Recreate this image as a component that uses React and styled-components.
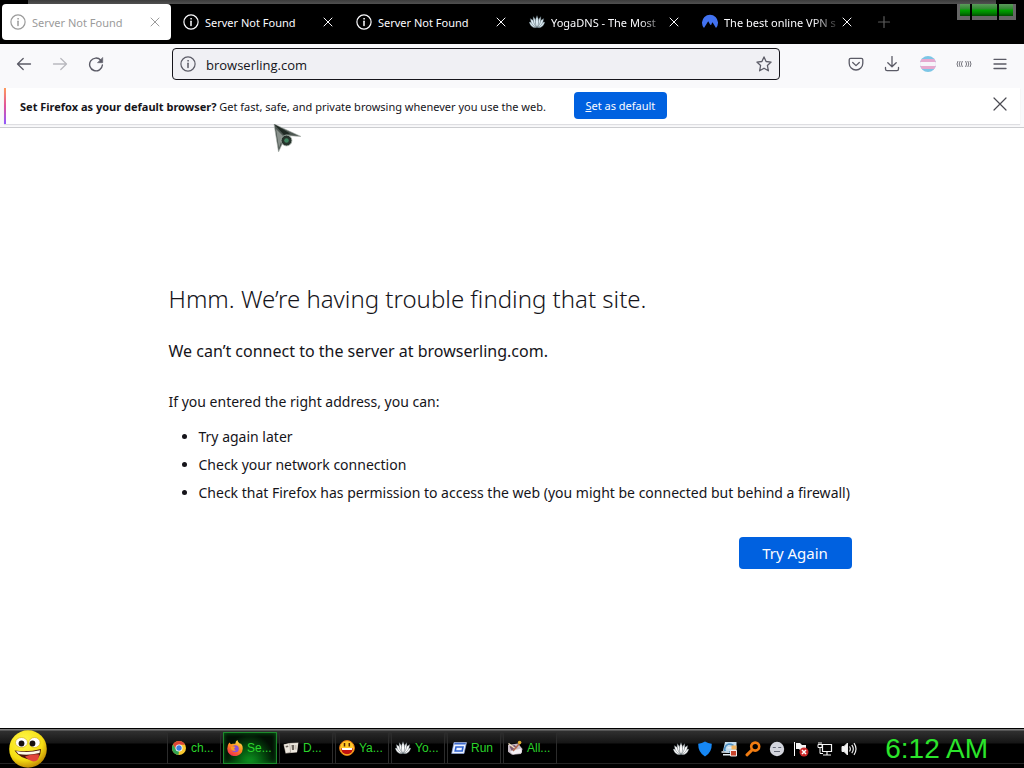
import React from 'react';
import styled, { createGlobalStyle, css } from 'styled-components';

const GlobalStyle = createGlobalStyle`
  * { box-sizing: border-box; }
  body { margin: 0; background: #fff; font-family: "Noto Sans", "Open Sans", sans-serif; color: #15141a; }
  button { font: inherit; color: inherit; background: none; border: 0; padding: 0; }
  h1, p, ul { margin: 0; }
  svg { display: block; flex: none; }
`;

const Desktop = styled.div`
  position: relative;
  display: flex;
  flex-direction: column;
  min-height: 100vh;
`;

/* Tab strip */
const TabStrip = styled.header`
  display: flex;
  align-items: flex-start;
  height: 44px;
  padding: 4px 8px 0 2px;
  background: #000;
`;
const WindowEdge = styled.div`
  position: absolute;
  top: 0;
  left: 28px;
  right: 28px;
  height: 4px;
  background: linear-gradient(#3c3c3c, #505050);
`;
const Tabs = styled.nav`
  display: flex;
  flex: 0 1 861px;
  gap: 4px;
  min-width: 0;
`;
const Tab = styled.div`
  display: flex;
  align-items: center;
  flex: 1 1 0;
  min-width: 0;
  height: 36px;
  padding: 0 6px 0 8px;
  border-radius: 4px;
  color: ${(p) => (p.$active ? '#9b9b9b' : '#fbfbfe')};
  background: ${(p) => (p.$active ? '#fff' : 'transparent')};
`;
const TabSelect = styled.button`
  display: flex;
  align-items: center;
  flex: 1;
  gap: 6px;
  min-width: 0;
  height: 36px;
`;
const TabLabel = styled.span`
  flex: 1;
  min-width: 0;
  overflow: hidden;
  white-space: nowrap;
  text-align: left;
  font-size: 11px;
  line-height: 18px;
  padding-top: 1px;
  ${(p) => p.$fade && css`mask-image: linear-gradient(to left, rgba(0, 0, 0, 0.15), #000 24px);`}
`;
const SmallButton = styled.button`
  display: grid;
  place-items: center;
  width: 20px;
  height: 20px;
`;
const NewTab = styled.button`
  display: grid;
  place-items: center;
  width: 28px;
  height: 36px;
  margin-left: 7px;
  color: #5c5c5c;
`;
const Meter = styled.div`
  display: flex;
  gap: 2px;
  margin-left: auto;
`;
const MeterCell = styled.span`
  width: ${(p) => p.$width}px;
  height: 16px;
  border: solid #666;
  border-width: 0 ${(p) => (p.$end === 'right' ? 3 : 0)}px 4px ${(p) => (p.$end === 'left' ? 3 : 0)}px;
  background: linear-gradient(#5c9a5c 0, #2f8a2f 5px, #00a400 6px, #008200 9px, #004c00 12px);
`;

/* Navigation bar */
const Toolbar = styled.div`
  display: flex;
  align-items: center;
  gap: 58px;
  height: 44px;
  padding: 0 6px 4px;
  background: #f9f9fb;
  color: #5b5b66;
`;
const ToolGroup = styled.div`
  display: flex;
`;
const ToolButton = styled.button`
  display: grid;
  place-items: center;
  width: 36px;
  height: 32px;
  opacity: ${(p) => (p.disabled ? 0.4 : 1)};
`;
const UrlBar = styled.form`
  display: flex;
  align-items: center;
  flex: 1;
  min-width: 0;
  height: 32px;
  padding: 0 5px 0 7px;
  gap: 10px;
  border: 1px solid #15141a;
  border-radius: 4px;
  background: #f0f0f4;
`;
const UrlInput = styled.input`
  flex: 1;
  min-width: 0;
  height: 28px;
  padding: 2px 0 0;
  border: 0;
  outline: 0;
  background: transparent;
  color: #15141a;
  font-family: "Open Sans", "Noto Sans", sans-serif;
  font-size: 13px;
`;

/* Default browser prompt */
const Prompt = styled.section`
  padding: 0 4px 3px;
  background: #f9f9fb;
  border-bottom: 1px solid #cccdd0;
`;
const PromptBody = styled.div`
  display: flex;
  align-items: flex-start;
  height: 36px;
  padding: 4px 10px 0 16px;
  background: linear-gradient(#ff9a5a, #e0529c 50%, #9059ff) left / 2px 100% no-repeat, #fff;
  box-shadow: 0 1px 1px #dedee2;
`;
const PromptText = styled.p`
  font-size: 11px;
  line-height: 30px;
  white-space: nowrap;
`;
const PrimaryButton = styled.button`
  flex: none;
  border-radius: 4px;
  background: #0061e0;
  color: #fbfbfe;
`;
const SetDefault = styled(PrimaryButton)`
  width: 93px;
  height: 27px;
  margin: 0 auto 0 28px;
  font-size: 11px;
`;
const Dismiss = styled(SmallButton)`
  height: 24px;
  color: #4a4a52;
`;

/* Error page */
const Page = styled.main`
  display: flex;
  flex: 1;
  align-items: center;
  justify-content: center;
  padding: 20px 24px 26px;
`;
const ErrorBox = styled.div`
  display: flex;
  flex-direction: column;
  width: 100%;
  max-width: 687px;
`;
const Title = styled.h1`
  font-size: 24px;
  font-weight: 300;
  line-height: 36px;
`;
const Lead = styled.p`
  margin-top: 20px;
  font-size: 16px;
  line-height: 28px;
`;
const Hint = styled.p`
  margin-top: 26px;
  font-size: 14px;
  line-height: 22px;
`;
const Steps = styled.ul`
  margin-top: 10px;
  padding-left: 30px;
  font-size: 14px;
  line-height: 28px;
`;
const TryAgain = styled(PrimaryButton)`
  align-self: flex-end;
  width: 113px;
  height: 32px;
  margin: 30px 4px 0 0;
  font-size: 15px;
`;

/* Taskbar */
const Taskbar = styled.footer`
  display: flex;
  align-items: center;
  height: 40px;
  padding: 0 36px 0 8px;
  border-top: 1px solid #000;
  background:
    linear-gradient(#242424, #242424) 0 34px / 100% 1px no-repeat,
    linear-gradient(#7a7a7a 0, #7a7a7a 1px, #303030 2px, #161616 14px, #000 15px);
`;
const StartButton = styled.button`
  width: 40px;
  height: 39px;
`;
const TaskList = styled.nav`
  display: flex;
  gap: 2px;
  margin-left: 119px;
  padding-bottom: 2px;
`;
const TaskButton = styled.button`
  display: flex;
  align-items: center;
  gap: 4px;
  width: 54px;
  height: 32px;
  padding-left: 3px;
  border: 1px solid #2b2b2b;
  background: linear-gradient(#262626, #131313 10px, #000 11px);
  color: #2bd42b;
  font-family: "Liberation Sans", Arial, sans-serif;
  font-size: 12px;
  white-space: nowrap;
  ${(p) => p.$active && css`
    border-color: #1c8a2c;
    background: radial-gradient(ellipse at 50% 110%, #0fa825 0, #04500e 40%, #020f04 70%);
    box-shadow: inset 0 0 4px #0a6a18;
  `}
`;
const Tray = styled.div`
  display: flex;
  gap: 4px;
  margin-left: auto;
`;
const TrayButton = styled.button`
  display: grid;
  place-items: center;
  width: 20px;
  height: 24px;
`;
const Clock = styled.time`
  margin-left: 26px;
  color: #2be52b;
  font-family: "Liberation Sans", Arial, sans-serif;
  font-size: 28px;
  line-height: 36px;
  white-space: nowrap;
`;
const Pointer = styled.svg`
  position: absolute;
  top: 124px;
  left: 273px;
`;

/* Icons */
const Line = ({ size = 16, children, width = 1.3, ...rest }) => (
  <svg width={size} height={size} viewBox="0 0 16 16" fill="none" stroke="currentColor"
    strokeWidth={width} strokeLinecap="round" strokeLinejoin="round" aria-hidden="true" {...rest}>
    {children}
  </svg>
);
const InfoIcon = () => (
  <Line width={1.2}>
    <circle cx="8" cy="8" r="7.1" />
    <path d="M8 7.2v4.3" strokeWidth="1.5" />
    <circle cx="8" cy="4.8" r=".5" fill="currentColor" strokeWidth=".6" />
  </Line>
);
const CloseIcon = () => <Line width={1}><path d="M4 4l8 8M12 4l-8 8" /></Line>;
const DismissIcon = () => <Line width={1.2}><path d="M2 2l12 12M14 2L2 14" /></Line>;
const PlusIcon = () => <Line width={1.2}><path d="M8 2.500v11M2.500 8h11" /></Line>;
const BackIcon = () => <Line width={1.3}><path d="M14.500 8H1.600M7.200 2.500L1.500 8l5.700 5.500" /></Line>;
const ForwardIcon = () => <Line width={1.3}><path d="M1.500 8h12.900M8.800 2.500L14.500 8l-5.700 5.500" /></Line>;
const ReloadIcon = () => (
  <Line width={1.4}>
    <path d="M12.800 4.200A6.400 6.400 0 1 0 14.400 9" />
    <path d="M14.700 1.800v4.900H9.800z" fill="currentColor" strokeWidth=".6" />
  </Line>
);
const StarIcon = () => (
  <Line width={1.3}><path d="M8 .9l2.100 4.600 5 .6-3.700 3.400 1 5.300L8 12.200l-4.400 2.600 1-5.300L.9 6.100l5-.6z" /></Line>
);
const PocketIcon = () => (
  <Line>
    <path d="M2.700 2.300h10.600c.9 0 1.500.6 1.500 1.500v3.400a6.800 6.800 0 0 1-13.600 0V3.800c0-.9.6-1.500 1.500-1.500z" />
    <path d="M4.700 6.500L8 9.600l3.300-3.100" />
  </Line>
);
const DownloadIcon = () => (
  <Line><path d="M8 .5v10.200M3.800 6.700L8 10.800l4.200-4.100M1.500 11.500V13c0 1 .6 1.600 1.600 1.600h9.800c1 0 1.600-.6 1.600-1.600v-1.500" /></Line>
);
const MenuIcon = () => <Line><path d="M2 3.300h12M2 8h12M2 12.500h12" /></Line>;
const FlagIcon = () => (
  <svg width="16" height="16" viewBox="0 0 16 16" aria-hidden="true">
    <clipPath id="flag-disc"><circle cx="8" cy="8" r="8" /></clipPath>
    <g clipPath="url(#flag-disc)">
      <path fill="#7cc6e6" d="M0 0h16v16H0z" />
      <path fill="#e6a9cf" d="M0 3h16v10H0z" />
      <path fill="#f6f4fa" d="M0 6h16v4H0z" />
    </g>
  </svg>
);
const WavesIcon = () => (
  <svg width="16" height="16" viewBox="0 0 16 16" fill="none" stroke="#77777f" strokeWidth="1" aria-hidden="true">
    <path d="M2 5Q0 8 2 11M4.200 5Q2.200 8 4.200 11M6.400 5Q4.400 8 6.400 11M9.600 5Q11.600 8 9.600 11M11.800 5Q13.800 8 11.800 11M14 5Q16 8 14 11" />
  </svg>
);
const LotusIcon = ({ color = '#dcecf4' }) => (
  <svg width="16" height="16" viewBox="0 0 16 16" fill={color} stroke="#2c3a42" strokeWidth=".4" aria-hidden="true">
    <path d="M0 8Q4.500 7.500 8 13.500Q2.500 15 0 8zM16 8Q11.500 7.500 8 13.500Q13.500 15 16 8z" />
    <path d="M1.200 4.500Q6 6 8 13.500Q2 12 1.200 4.500zM14.800 4.500Q10 6 8 13.500Q14 12 14.800 4.500z" />
    <path d="M4.200 2.500Q8 6 8 13.500Q3.500 9.500 4.200 2.500zM11.800 2.500Q8 6 8 13.500Q12.500 9.500 11.800 2.500z" />
    <path d="M8 1.500Q11.200 8 8 14Q4.800 8 8 1.500z" />
  </svg>
);
const NordIcon = () => (
  <svg width="16" height="16" viewBox="0 0 16 16" aria-hidden="true">
    <path fill="#4272f0" d="M2 14A8 8 0 1 1 14 14L10.500 8.200 9.200 10.400 9.500 10.900 8.200 10.700 6.200 7.300z" />
  </svg>
);
const SmileyIcon = () => (
  <svg width="40" height="39" viewBox="0 0 40 39" aria-hidden="true">
    <defs>
      <radialGradient id="smiley-skin" cx=".4" cy=".3" r=".75">
        <stop offset="0" stopColor="#fff94e" /><stop offset=".65" stopColor="#f6de12" /><stop offset="1" stopColor="#b87c00" />
      </radialGradient>
    </defs>
    <circle cx="20" cy="20" r="18.800" fill="url(#smiley-skin)" />
    <ellipse cx="13.500" cy="13.500" rx="6" ry="5" fill="#fff" stroke="#cfa800" strokeWidth=".6" />
    <ellipse cx="26.500" cy="13.500" rx="5.600" ry="5" fill="#fff" stroke="#cfa800" strokeWidth=".6" />
    <circle cx="13.500" cy="14.500" r="2.900" fill="#171010" />
    <circle cx="24.500" cy="14.500" r="2.900" fill="#171010" />
    <path d="M6.500 21.500Q20 23.500 33 20Q32.500 31 25 31Q12 30 6.500 21.500z" fill="#4b1608" />
    <path d="M8 22Q20 24.200 32 21.200L31.500 24Q20 27 10.500 25z" fill="#fffbe8" />
    <path d="M17 27.500Q25 24.500 31 25.500Q31 32.500 25.500 32.500Q20.500 31.500 17 27.500z" fill="#e1453a" />
  </svg>
);
const ChromeIcon = () => (
  <svg width="16" height="16" viewBox="0 0 16 16" aria-hidden="true">
    <circle cx="8" cy="8" r="7" fill="#f9c82f" />
    <path fill="#dd4537" d="M2 4.400A7 7 0 0 1 14.100 4.700H8L5 9.500z" />
    <path fill="#31a452" d="M2 4.400L5.100 9.700 8 11.300 7.500 15A7 7 0 0 1 2 4.400z" />
    <circle cx="8" cy="8" r="3.500" fill="#fff" />
    <circle cx="8" cy="8" r="2.700" fill="#3f7de0" />
  </svg>
);
const FirefoxIcon = () => (
  <svg width="16" height="16" viewBox="0 0 16 16" aria-hidden="true">
    <defs>
      <linearGradient id="fox" x1=".8" y1="0" x2=".3" y2="1">
        <stop offset="0" stopColor="#ffe14a" /><stop offset=".5" stopColor="#ff8a1f" /><stop offset="1" stopColor="#ee2a50" />
      </linearGradient>
    </defs>
    <path fill="url(#fox)" d="M2.300 2.500L4 4.200 5.600 3.700Q7.600 4 8.400 3.600Q8.500 1 10.300 0Q10.700 2.200 13.300 4L13.800 3.300Q16 6 15.700 9A7.700 7.200 0 0 1 .3 8.800Q.2 5.200 2.300 2.500z" />
    <circle cx="8.300" cy="8.700" r="3.500" fill="#8950d8" />
    <path d="M4 6.700Q6.500 5.500 8.500 7.200L6.800 8.700 8.800 10.500Q6 11.800 4 9z" fill="#ff9a25" />
  </svg>
);
const BookIcon = () => (
  <svg width="16" height="16" viewBox="0 0 16 16" aria-hidden="true">
    <path fill="#a9a198" d="M.5 4.500L6 3l9.500-.5L14 12.500 2.500 13.500z" />
    <path fill="#ece7dd" d="M1 4.500L6.500 3.500 7 12 3 13zM7 3.500L15 3l-1 9-6 .6z" />
    <path fill="#6d655d" d="M8.500 5h2.500v5H9zM2.500 6l2.500-.5.4 1.500-2.400.4z" />
    <path fill="#c9c1b5" d="M11.500 5h2v4.500h-2z" />
  </svg>
);
const GrinIcon = () => (
  <svg width="16" height="16" viewBox="0 0 16 16" aria-hidden="true">
    <circle cx="8" cy="8" r="7.400" fill="#ffc928" stroke="#e87a15" />
    <path stroke="#542105" strokeWidth="1.500" d="M5.500 3v3.500M10.300 3v3.500" />
    <path fill="#c01010" d="M2 8h12Q13.500 14.200 8 14.200T2 8z" />
    <path fill="#fff" d="M2.600 8h10.800l-.5 2H3.200z" />
  </svg>
);
const RunIcon = () => (
  <svg width="16" height="16" viewBox="0 0 16 16" aria-hidden="true">
    <path fill="#edf3ff" stroke="#8ea4d8" strokeWidth=".7" d="M3 2.500h12.500L13 13.500H.7z" />
    <path fill="#3d69cb" d="M3.500 3h11.400l-.4 1.600H3.100z" />
    <path fill="none" stroke="#2c60ce" strokeWidth="1.600" d="M5 7h7l-.8 4H4.200z" />
  </svg>
);
const ToolsIcon = () => (
  <svg width="16" height="16" viewBox="0 0 16 16" aria-hidden="true">
    <path fill="#cbbfc9" d="M1 5l10-1.500L15.500 9 14 14l-9 .8-4-3z" />
    <path fill="#f4f0f4" d="M3 11.500l11-3 1 4-9 2z" />
    <path fill="#7d586f" d="M2.500 6.500l5-1.500 3 3-6 2.500z" />
    <path stroke="#f1dfbe" strokeWidth="1.500" d="M1.500 3.500l8 6" />
    <path stroke="#b36a51" strokeWidth="1.500" d="M6 11l6-7" />
    <circle cx="12.600" cy="2.600" r="1.800" fill="#e4ad2d" />
  </svg>
);
const ShieldIcon = () => (
  <svg width="16" height="16" viewBox="0 0 16 16" aria-hidden="true">
    <path fill="#1687f4" d="M8 .6Q11 2.700 14.800 2.800Q15 11.500 8 15.600Q1 11.500 1.200 2.800Q5 2.700 8 .6z" />
  </svg>
);
const NetAppIcon = () => (
  <svg width="16" height="16" viewBox="0 0 16 16" aria-hidden="true">
    <path fill="#c4dcec" d="M4 1h11.500v9H2z" />
    <path fill="none" stroke="#4d90c4" strokeWidth="1.700" d="M12.500 4.500Q6 1 4 6.500T10 11" />
    <path fill="none" stroke="#e4edf3" strokeWidth="1.600" d="M.5 11h8M2 13.800h7M6.500 6.800h5" />
    <path fill="#f2b45f" d="M10.500 4.500h5v4h-5z" />
    <path fill="#c8442b" stroke="#fff" strokeWidth=".9" d="M9.500 9.500h6v5.500h-6z" />
  </svg>
);
const MagnifierIcon = () => (
  <svg width="16" height="16" viewBox="0 0 16 16" fill="none" stroke="#f07c12" aria-hidden="true">
    <circle cx="10.200" cy="5.600" r="4" strokeWidth="2.600" /><path strokeWidth="3" strokeLinecap="round" d="M6.600 9.400L2 13.800" />
  </svg>
);
const FaceIcon = () => (
  <svg width="16" height="16" viewBox="0 0 16 16" aria-hidden="true">
    <circle cx="8" cy="8" r="7.200" fill="#d3d5dd" /><path fill="none" stroke="#646977" strokeWidth="1.100" d="M3.800 6.500h3M9.200 6.500h3M5 10.500h6" />
  </svg>
);
const ActionIcon = () => (
  <svg width="16" height="16" viewBox="0 0 16 16" aria-hidden="true">
    <path stroke="#fff" d="M1.500 1v14" /><path fill="#f5f5f5" d="M3 2h4l2 2h4v6H8L6 8H3z" />
    <circle cx="11" cy="11" r="4.500" fill="#cc2828" /><path stroke="#fff" strokeWidth="1.500" d="M9 9l4 4M13 9l-4 4" />
  </svg>
);
const NetworkIcon = () => (
  <svg width="16" height="16" viewBox="0 0 16 16" fill="none" stroke="#f4f4f4" aria-hidden="true">
    <path strokeWidth="1.200" d="M5.500 3.500h9v7h-9zM10 10.500v3M6 14h8" /><path fill="#000" d="M1 3.500h4v3H1zM2 1v2M4 1v2M3 6.500v6h3" />
  </svg>
);
const VolumeIcon = () => (
  <svg width="16" height="16" viewBox="0 0 16 16" fill="none" stroke="#ececec" aria-hidden="true">
    <path fill="#f4f4f4" d="M1 5.500h2l3.500-3.500v12L3 10.500H1z" /><path strokeWidth="1.200" d="M8.500 5.500q1.700 2.500 0 5M10.800 3.800q3 4.200 0 8.400M13 2.200q4 5.800 0 11.600" />
  </svg>
);

const tabs = [
  { label: 'Server Not Found', icon: <InfoIcon />, active: true },
  { label: 'Server Not Found', icon: <InfoIcon /> },
  { label: 'Server Not Found', icon: <InfoIcon /> },
  { label: 'YogaDNS - The Most', icon: <LotusIcon />, fade: true },
  { label: 'The best online VPN s', icon: <NordIcon />, fade: true },
];
const tasks = [
  { label: 'ch...', icon: <ChromeIcon /> },
  { label: 'Se...', icon: <FirefoxIcon />, active: true },
  { label: 'D...', icon: <BookIcon /> },
  { label: 'Ya...', icon: <GrinIcon /> },
  { label: 'Yo...', icon: <LotusIcon color="#fff" /> },
  { label: 'Run', icon: <RunIcon /> },
  { label: 'All...', icon: <ToolsIcon /> },
];
const tray = [
  ['YogaDNS', <LotusIcon color="#fff" />],
  ['Security', <ShieldIcon />],
  ['Network manager', <NetAppIcon />],
  ['Search', <MagnifierIcon />],
  ['Messenger', <FaceIcon />],
  ['Action center', <ActionIcon />],
  ['Network', <NetworkIcon />],
  ['Volume', <VolumeIcon />],
];

export default function App() {
  return (
    <Desktop>
      <GlobalStyle />
      <TabStrip>
        <WindowEdge />
        <Tabs aria-label="Tabs">
          {tabs.map((t, i) => (
            <Tab key={i} $active={t.active}>
              <TabSelect type="button">
                {t.icon}
                <TabLabel $fade={t.fade}>{t.label}</TabLabel>
              </TabSelect>
              <SmallButton type="button" aria-label="Close tab"><CloseIcon /></SmallButton>
            </Tab>
          ))}
        </Tabs>
        <NewTab type="button" aria-label="New tab"><PlusIcon /></NewTab>
        <Meter aria-hidden="true">
          <MeterCell $width={13} $end="left" />
          <MeterCell $width={25} />
          <MeterCell $width={17} $end="right" />
        </Meter>
      </TabStrip>

      <Toolbar>
        <ToolGroup>
          <ToolButton type="button" aria-label="Back"><BackIcon /></ToolButton>
          <ToolButton type="button" aria-label="Forward" disabled><ForwardIcon /></ToolButton>
          <ToolButton type="button" aria-label="Reload"><ReloadIcon /></ToolButton>
        </ToolGroup>
        <UrlBar onSubmit={(e) => e.preventDefault()}>
          <InfoIcon />
          <UrlInput aria-label="Address" defaultValue="browserling.com" />
          <SmallButton type="button" aria-label="Bookmark"><StarIcon /></SmallButton>
        </UrlBar>
        <ToolGroup>
          <ToolButton type="button" aria-label="Pocket"><PocketIcon /></ToolButton>
          <ToolButton type="button" aria-label="Downloads"><DownloadIcon /></ToolButton>
          <ToolButton type="button" aria-label="Flag extension"><FlagIcon /></ToolButton>
          <ToolButton type="button" aria-label="Sound extension"><WavesIcon /></ToolButton>
          <ToolButton type="button" aria-label="Menu"><MenuIcon /></ToolButton>
        </ToolGroup>
      </Toolbar>

      <Prompt>
        <PromptBody>
          <PromptText>
            <b>Set Firefox as your default browser?</b> Get fast, safe, and private browsing whenever you use the web.
          </PromptText>
          <SetDefault type="button"><u>S</u>et as default</SetDefault>
          <Dismiss type="button" aria-label="Dismiss"><DismissIcon /></Dismiss>
        </PromptBody>
      </Prompt>

      <Page>
        <ErrorBox>
          <Title>Hmm. We’re having trouble finding that site.</Title>
          <Lead>We can’t connect to the server at browserling.com.</Lead>
          <Hint>If you entered the right address, you can:</Hint>
          <Steps>
            <li>Try again later</li>
            <li>Check your network connection</li>
            <li>Check that Firefox has permission to access the web (you might be connected but behind a firewall)</li>
          </Steps>
          <TryAgain type="button">Try Again</TryAgain>
        </ErrorBox>
      </Page>

      <Taskbar>
        <StartButton type="button" aria-label="Start"><SmileyIcon /></StartButton>
        <TaskList aria-label="Open windows">
          {tasks.map((t) => (
            <TaskButton key={t.label} type="button" $active={t.active}>{t.icon}{t.label}</TaskButton>
          ))}
        </TaskList>
        <Tray>
          {tray.map(([name, icon]) => (
            <TrayButton key={name} type="button" aria-label={name}>{icon}</TrayButton>
          ))}
        </Tray>
        <Clock>6:12 AM</Clock>
      </Taskbar>

      <Pointer width="30" height="30" viewBox="0 0 30 30" aria-hidden="true">
        <path fill="#4c5651" stroke="#a9b0ab" strokeWidth=".6" d="M1 0L28 12.500 13 11.500 5.500 28z" />
        <path fill="#202a24" d="M1 0L17 9.500 11 11z" />
        <path fill="#89918c" d="M3 5L10 12 6 24z" />
        <circle cx="13.500" cy="16.500" r="5.400" fill="#27332c" stroke="#a9b5ad" strokeWidth=".8" />
        <circle cx="13.500" cy="16.500" r="2.300" fill="#3f8560" />
      </Pointer>
    </Desktop>
  );
}
